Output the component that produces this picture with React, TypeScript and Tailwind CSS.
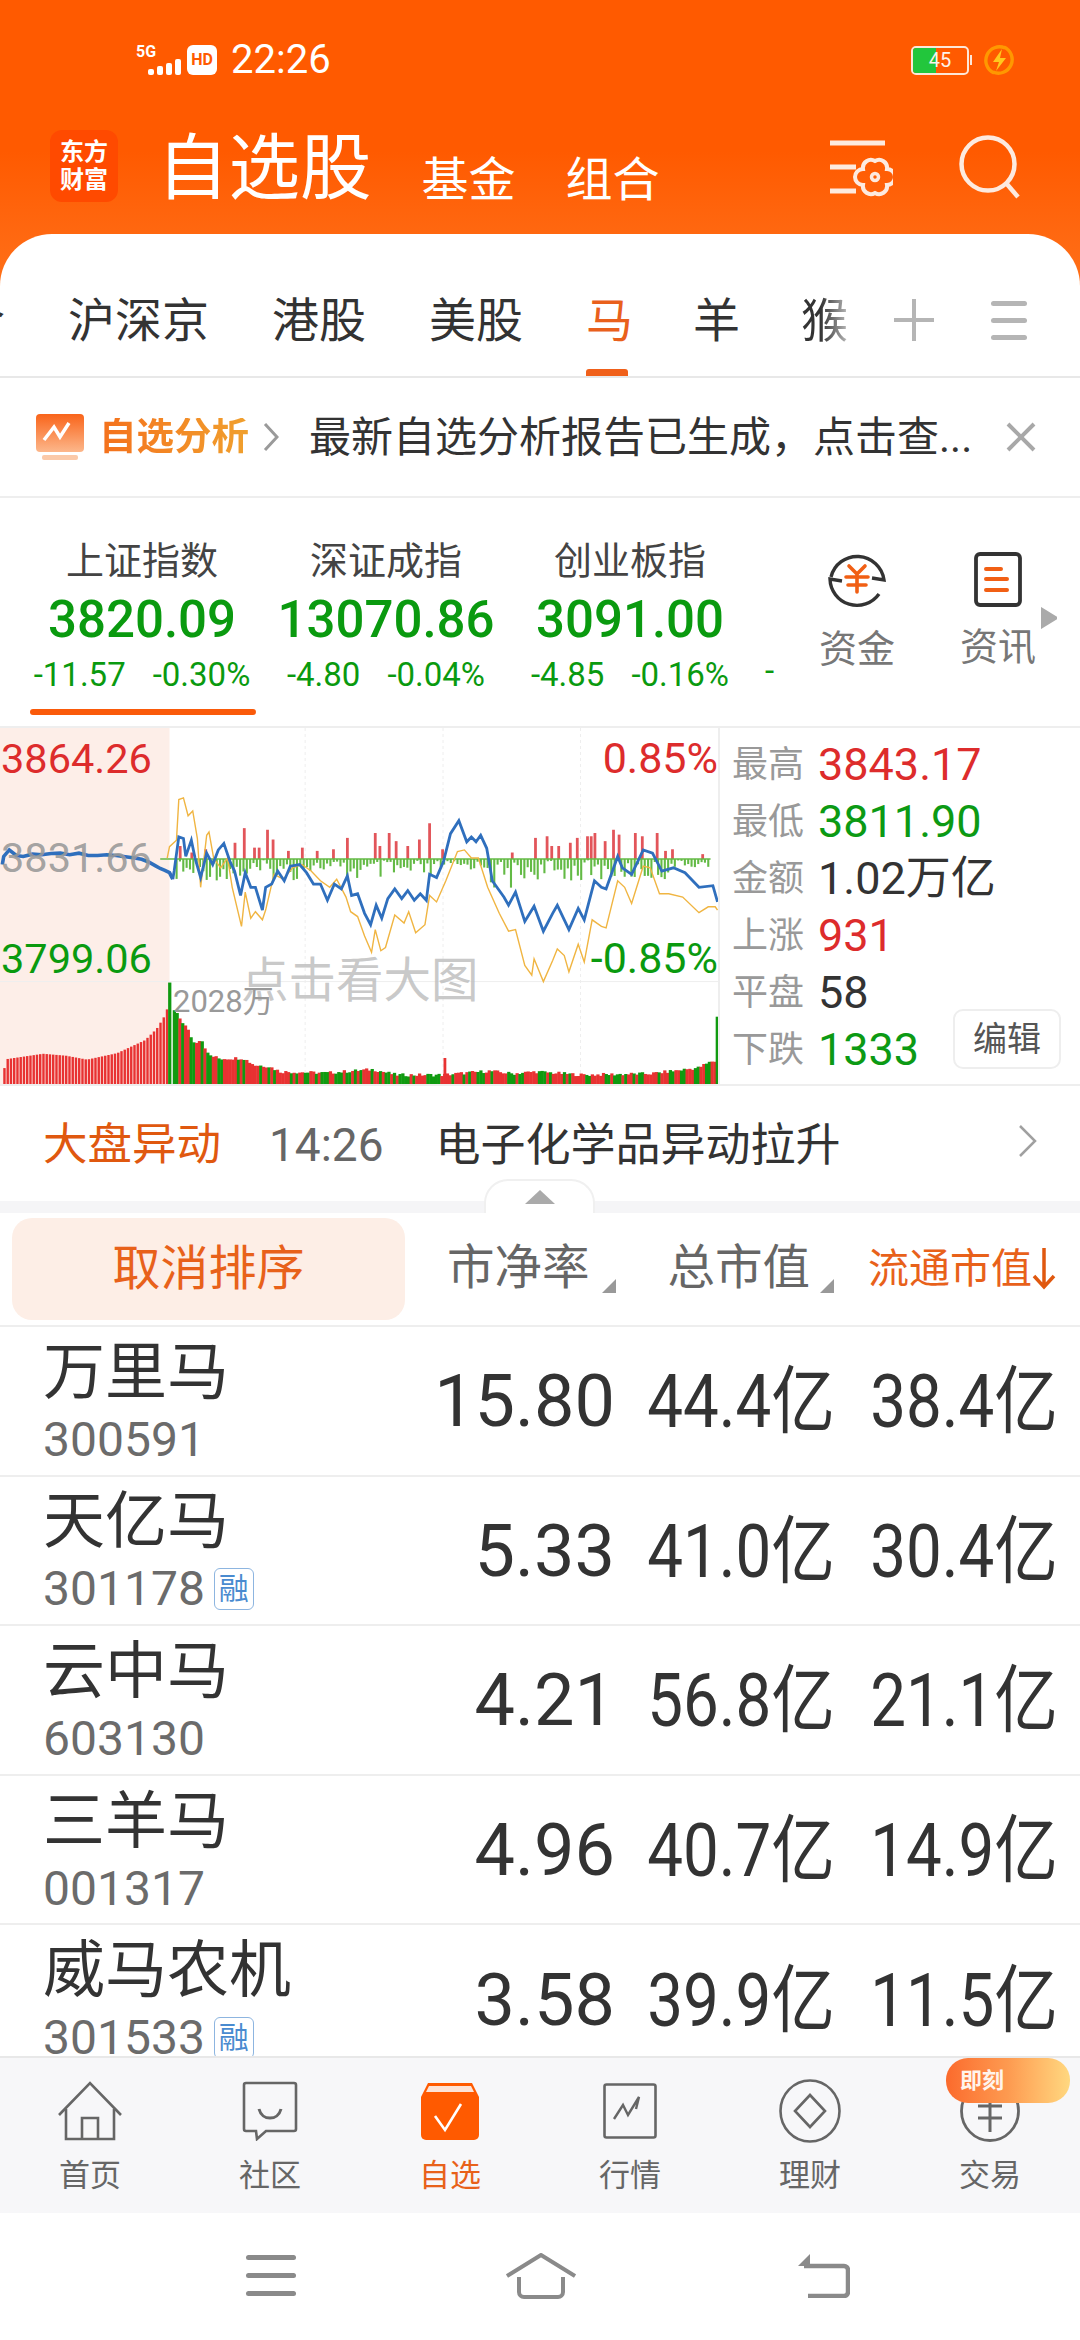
const blue1 = "5,420 8,395 20,375 35,392 50,395 70,388 90,390 110,386 130,385 150,390 170,385 190,392 210,392 230,390 250,392 270,396 290,400 305,404 320,412 335,424 345,432 355,438 365,445 372,465"
const blue2 = "372,465 375,440 385,335 395,340 400,395 412,345 420,400 432,460 445,385 458,420 470,375 482,355 495,410 505,440 518,515 528,445 540,490 550,490 565,560 572,490 585,480 598,440 612,470 625,425 645,420 660,445 675,480 690,480 705,530 720,480 735,495 748,455 757,515 770,510 785,570 798,605 810,545 822,585 835,525 850,495 865,525 878,500 892,530 905,510 918,530 925,450 940,460 955,410 970,325 988,285 1005,350 1015,335 1025,350 1035,330 1048,370 1060,470 1085,520 1095,545 1110,505 1130,595 1150,548 1170,625 1190,570 1200,545 1215,590 1225,620 1245,555 1258,590 1280,470 1295,490 1305,495 1330,395 1340,430 1360,450 1385,375 1405,385 1425,440 1450,430 1475,445 1505,490 1535,485 1545,535"
const yellow = "360,400 365,365 380,345 385,220 395,215 405,270 415,255 425,340 432,490 445,330 450,320 460,400 475,430 490,400 500,490 520,610 528,505 540,585 550,565 565,590 572,560 590,450 610,465 630,430 650,420 670,440 690,470 710,490 725,465 745,520 755,565 770,580 785,640 800,690 808,620 820,685 830,675 850,575 870,600 880,565 895,630 915,605 925,515 940,535 960,470 985,380 1000,375 1015,400 1030,400 1050,490 1075,570 1095,625 1110,620 1130,730 1145,760 1150,710 1170,780 1190,715 1200,680 1215,700 1225,750 1245,665 1258,720 1275,590 1295,610 1305,615 1330,470 1345,490 1360,540 1385,425 1400,430 1420,510 1440,510 1470,520 1505,568 1525,550 1540,550 1545,560"

const redBars = [[385,40],[410,20],[440,30],[503,50],[523,95],[545,35],[555,35],[573,90],[585,60],[618,25],[648,35],[680,25],[715,30],[745,65],[805,80],[815,40],[835,80],[850,55],[875,40],[900,60],[922,110],[950,30],[1100,20],[1150,65],[1175,70],[1185,40],[1200,40],[1225,50],[1240,65],[1262,70],[1270,70],[1278,80],[1300,55],[1318,90],[1330,75],[1365,80],[1380,70],[1412,80],[1430,25],[1445,30],[1510,15]]

const rnd = (n: number) => {
  const v = Math.sin(n * 12.9898) * 43758.5453
  return v - Math.floor(v)
}

const greenBars = Array.from({ length: 160 }, (_, i) => {
  const x = 378 + i * 7.2
  let max = 62
  if (x > 640 && x < 730) max = 35
  if (x > 940 && x < 1050) max = 30
  if (x > 1050 && x < 1120) max = 90
  if (x > 1440) max = 22
  return { x, h: 4 + rnd(i + 1) * max }
})

const volPts = [[365,860],[385,900],[400,930],[415,975],[430,960],[445,1010],[470,1022],[520,1020],[545,1042],[575,1045],[600,1062],[700,1066],[800,1055],[850,1072],[950,1072],[1050,1060],[1100,1068],[1150,1062],[1250,1072],[1400,1068],[1500,1050],[1530,1030]]
const prePts = [[6,1050],[14,1018],[90,1002],[140,1008],[185,1020],[250,1000],[310,960],[335,925],[350,890],[360,855]]

const lerp = (pts: number[][], x: number) => {
  for (let i = 1; i < pts.length; i++) {
    if (x <= pts[i][0]) {
      const t = (x - pts[i - 1][0]) / (pts[i][0] - pts[i - 1][0])
      return pts[i - 1][1] + t * (pts[i][1] - pts[i - 1][1])
    }
  }
  return pts[pts.length - 1][1]
}

const preBars = Array.from({ length: 51 }, (_, i) => 7 + i * 7)
const volBars = Array.from({ length: 195 }, (_, i) => {
  const x = 372 + i * 6
  return { x, top: lerp(volPts, x) - rnd(i + 40) * 10, up: rnd(i + 300) > 0.5 }
})

function IntradayChart() {
  return (
    <svg viewBox="0 0 1546 1095" preserveAspectRatio="none" className="absolute inset-0 w-full h-full">
      <rect x="0" y="0" width="365" height="1095" fill="#fdeee8" />
      <line x1="0" y1="780" x2="1546" y2="780" stroke="#eee" strokeWidth="1" vectorEffect="non-scaling-stroke" />
      {[657, 954, 1250].map((x) => (
        <line key={x} x1={x} y1="0" x2={x} y2="1095" stroke="#eee" strokeWidth="1" strokeDasharray="3 3" vectorEffect="non-scaling-stroke" />
      ))}
      {greenBars.map((b) => (
        <rect key={b.x} x={b.x} y="403" width="4.5" height={b.h} fill="#63ba45" />
      ))}
      {redBars.map(([x, h]) => (
        <rect key={x} x={x} y={403 - h} width="6" height={h} fill="#e2555a" />
      ))}
      <line x1="345" y1="403" x2="1530" y2="403" stroke="#63ba45" strokeWidth="1.5" vectorEffect="non-scaling-stroke" />
      <polyline points={yellow} fill="none" stroke="#f0b542" strokeWidth="1.4" vectorEffect="non-scaling-stroke" />
      <polyline points={blue2} fill="none" stroke="#2f6fbd" strokeWidth="2.8" vectorEffect="non-scaling-stroke" />
      <polyline points={blue1} fill="none" stroke="#2f6fbd" strokeWidth="3.6" vectorEffect="non-scaling-stroke" />
      {preBars.map((x) => (
        <rect key={x} x={x} y={lerp(prePts, x)} width="5.2" height={1095 - lerp(prePts, x)} fill="#e83232" />
      ))}
      {volBars.map((b) => (
        <rect key={b.x} x={b.x} y={b.top} width="7" height={1095 - b.top} fill={b.up ? "#e83232" : "#109a10"} />
      ))}
      <rect x="362" y="783" width="7" height="312" fill="#109a10" />
      <rect x="955" y="1015" width="6" height="80" fill="#e83232" />
      <rect x="1541" y="888" width="5" height="207" fill="#109a10" />
    </svg>
  )
}

function SettingsIcon() {
  return (
    <svg width="64" height="58" viewBox="0 0 64 58" fill="none" stroke="#fdeadf" strokeWidth="5">
      <path d="M1 4h55M1 28h26M1 52h26" />
      <path d="M46 22A8 8 0 0 1 58 30A8 8 0 0 1 58 46A8 8 0 0 1 46 54A8 8 0 0 1 34 46A8 8 0 0 1 34 30A8 8 0 0 1 46 22z" strokeWidth="4" />
      <circle cx="46" cy="38" r="3.5" strokeWidth="3.5" />
    </svg>
  )
}

function HomeIcon() {
  return (
    <svg width="64" height="60" viewBox="0 0 64 60" fill="none" stroke="#666" strokeWidth="2.6">
      <path d="M1 34L32 2l31 32" />
      <path d="M8 28v30h48V28M24 58V37h16v21" />
    </svg>
  )
}

function CommunityIcon() {
  return (
    <svg width="56" height="60" viewBox="0 0 56 60" fill="none" stroke="#666" strokeWidth="2.6">
      <path d="M4 2h48a2 2 0 0 1 2 2v44a2 2 0 0 1-2 2H24l-9 8-1-8H4a2 2 0 0 1-2-2V4a2 2 0 0 1 2-2z" />
      <path d="M17 28c3 12 19 12 22 0" strokeWidth="3" />
    </svg>
  )
}

function WatchIcon() {
  return (
    <svg width="58" height="58" viewBox="0 0 58 58" fill="none">
      <path d="M7 1h44l7 14v38a5 5 0 0 1-5 5H5a5 5 0 0 1-5-5V15z" fill="#ff5a00" />
      <path d="M8 4h42l3 6H5z" fill="#fde3d6" />
      <path d="M14 34l10 14L40 22" stroke="#fff" strokeWidth="2.6" />
    </svg>
  )
}

function MarketIcon() {
  return (
    <svg width="54" height="56" viewBox="0 0 54 56" fill="none" stroke="#666" strokeWidth="2.6">
      <rect x="1.5" y="1.5" width="51" height="53" rx="2" />
      <path d="M11 36l9-14 5 10 11-18-3 12" strokeWidth="2.4" />
    </svg>
  )
}

function FinanceIcon() {
  return (
    <svg width="62" height="64" viewBox="0 0 62 64" fill="none" stroke="#666" strokeWidth="2.6">
      <ellipse cx="31" cy="32" rx="29.5" ry="30.5" />
      <path d="M31 16l15 16-15 16-15-16z" />
    </svg>
  )
}

function TradeIcon() {
  return (
    <svg width="60" height="62" viewBox="0 0 60 62" fill="none" stroke="#666" strokeWidth="2.8">
      <ellipse cx="30" cy="31" rx="28.5" ry="29.5" />
      <path d="M18 26h24M18 38h24M30 22v30" strokeWidth="3" />
    </svg>
  )
}

const navItems = [
  { label: "首页", icon: <HomeIcon /> },
  { label: "社区", icon: <CommunityIcon /> },
  { label: "自选", icon: <WatchIcon />, active: true },
  { label: "行情", icon: <MarketIcon /> },
  { label: "理财", icon: <FinanceIcon /> },
  { label: "交易", icon: <TradeIcon /> },
]

const indexes = [
  { name: "上证指数", value: "3820.09", change: "-11.57", pct: "-0.30%" },
  { name: "深证成指", value: "13070.86", change: "-4.80", pct: "-0.04%" },
  { name: "创业板指", value: "3091.00", change: "-4.85", pct: "-0.16%" },
]

const stats = [
  { label: "最高", value: "3843.17", color: "text-[#dd2c2c]" },
  { label: "最低", value: "3811.90", color: "text-[#0c9a14]" },
  { label: "金额", value: "1.02万亿", color: "text-[#333]" },
  { label: "上涨", value: "931", color: "text-[#dd2c2c]" },
  { label: "平盘", value: "58", color: "text-[#333]" },
  { label: "下跌", value: "1333", color: "text-[#0c9a14]" },
]

const stocks = [
  { name: "万里马", code: "300591", pb: "15.80", cap: "44.4亿", flow: "38.4亿" },
  { name: "天亿马", code: "301178", pb: "5.33", cap: "41.0亿", flow: "30.4亿", margin: true },
  { name: "云中马", code: "603130", pb: "4.21", cap: "56.8亿", flow: "21.1亿" },
  { name: "三羊马", code: "001317", pb: "4.96", cap: "40.7亿", flow: "14.9亿" },
  { name: "威马农机", code: "301533", pb: "3.58", cap: "39.9亿", flow: "11.5亿", margin: true },
]

export default function App() {
  return (
    <div className="w-[1080px] h-[2340px] overflow-hidden flex flex-col bg-white text-[#333] font-['Roboto','Noto_Sans_CJK_SC',sans-serif]">
      {/* Orange header + tabs */}
      <div className="bg-gradient-to-b from-[#ff5a00] from-[40%] to-[#ff7d22]">
        <div className="h-[120px] flex items-center pl-[136px] pr-[66px] text-white">
          <div className="flex flex-col items-start leading-none">
            <span className="text-[16px] font-bold leading-[14px]">5G</span>
            <div className="flex items-end gap-[3px] h-[16px] ml-[12px]">
              <span className="w-[6px] h-[6px] bg-white rounded-[2px]" />
              <span className="w-[6px] h-[9px] bg-white rounded-[2px]" />
              <span className="w-[6px] h-[12px] bg-white rounded-[2px]" />
              <span className="w-[6px] h-[16px] bg-white rounded-[2px]" />
            </div>
          </div>
          <span className="ml-[6px] w-[30px] h-[30px] rounded-[6px] bg-white text-[#ff5a00] text-[16px] font-bold flex items-center justify-center">HD</span>
          <span className="ml-[14px] text-[40px] leading-[36px]">22:26</span>
          <div className="ml-auto flex items-center gap-[12px]">
            <div className="flex items-center">
              <div className="w-[58px] h-[29px] rounded-[5px] border-2 border-[#fde7d8] overflow-hidden relative flex items-center justify-center">
                <span className="absolute left-0 top-0 bottom-0 w-[23px] bg-[#22c63c]" />
                <span className="relative text-[20px] text-[#fdf3ea]">45</span>
              </div>
              <span className="w-[2px] h-[10px] bg-[#fde7d8] ml-[1px]" />
            </div>
            <svg width="30" height="32" viewBox="0 0 30 32" fill="none">
              <path d="M21 4A13.5 13.5 0 0 0 10 29M9 28A13.5 13.5 0 0 0 20 3M19 3" stroke="#ff9800" strokeWidth="3.4" />
              <path d="M18 5L9 18h6l-3 9 10-13h-6z" fill="#ffc81e" />
            </svg>
          </div>
        </div>
        <div className="h-[114px] flex pl-[50px] pr-[57px] pt-[10px] text-white">
          <div className="w-[68px] h-[72px] rounded-[12px] bg-[#ff4a00] flex flex-col items-center justify-center text-[24px] font-bold leading-[28px]">
            <span>东方</span>
            <span>财富</span>
          </div>
          <span className="ml-[39px] mt-[3px] text-[71.5px] leading-[72px] h-[72px]">自选股</span>
          <span className="ml-[50px] mt-[24px] text-[47px] leading-[52px]">基金</span>
          <span className="ml-[50px] mt-[24px] text-[47px] leading-[52px]">组合</span>
          <div className="ml-auto flex items-start gap-[66px] pt-[9px]">
            <SettingsIcon />
            <svg width="64" height="64" viewBox="0 0 64 64" fill="none" stroke="#fdeadf" strokeWidth="4.5" className="-mt-[4px]">
              <circle cx="29" cy="29" r="26.5" />
              <path d="M47 48l12 14" />
            </svg>
          </div>
        </div>

        <div className="rounded-t-[52px] bg-white h-[144px] border-b-2 border-[#e8e8e8] overflow-hidden relative flex items-center text-[47px] leading-none pt-[30px]">
          <div className="flex items-center gap-[63px] ml-[-42px]">
            <span>合</span>
            <span>沪深京</span>
            <span>港股</span>
            <span>美股</span>
            <span className="text-[#e9601c]">马</span>
            <span className="-ml-[3px]">羊</span>
            <span className="-ml-[2px] bg-gradient-to-r from-[#333] from-[40%] to-[#bbb] bg-clip-text text-transparent">猴</span>
          </div>
          <svg width="40" height="42" viewBox="0 0 40 42" className="ml-[46px]" stroke="#b5b5b5" strokeWidth="4">
            <path d="M20 0v42M0 21h40" />
          </svg>
          <div className="ml-[57px] flex flex-col gap-[12px]">
            <span className="w-[36px] h-[5px] bg-[#b5b5b5] rounded-full" />
            <span className="w-[36px] h-[5px] bg-[#b5b5b5] rounded-full" />
            <span className="w-[36px] h-[5px] bg-[#b5b5b5] rounded-full" />
          </div>
          <span className="absolute left-[586px] bottom-0 w-[42px] h-[7px] rounded-t-[3px] bg-[#f0601a]" />
        </div>
      </div>

      {/* Analysis notice */}
      <div className="h-[120px] shrink-0 flex items-center pl-[36px] border-b-2 border-[#eee]">
        <svg width="48" height="46" viewBox="0 0 48 46" fill="none">
          <rect width="48" height="38" rx="4" fill="url(#noticeFill)" />
          <path d="M8 26l10-13 6 10 9-14" stroke="#fff" strokeWidth="3.5" />
          <rect x="6" y="41" width="36" height="5" rx="2" fill="#fbc9a8" />
          <defs>
            <linearGradient id="noticeFill" x1="0" y1="0" x2="0" y2="1">
              <stop offset="0" stopColor="#f9641a" />
              <stop offset="1" stopColor="#fcb78b" />
            </linearGradient>
          </defs>
        </svg>
        <span className="ml-[15px] text-[37.5px] leading-none font-bold bg-gradient-to-r from-[#f4701c] to-[#f0a02e] bg-clip-text text-transparent">自选分析</span>
        <svg width="16" height="30" viewBox="0 0 16 30" className="ml-[14px]" fill="none" stroke="#9a9a9a" strokeWidth="3">
          <path d="M2 2l12 13L2 28" />
        </svg>
        <span className="ml-[30px] text-[42px] leading-none whitespace-nowrap pt-[2px]">最新自选分析报告已生成，点击查...</span>
        <svg width="30" height="30" viewBox="0 0 30 30" className="ml-[34px] shrink-0" stroke="#a8a8a8" strokeWidth="4">
          <path d="M2 2l26 26M28 2L2 28" />
        </svg>
      </div>

      {/* Index strip */}
      <div className="h-[230px] shrink-0 flex pl-[20px] relative border-b-2 border-[#eee]">
        {indexes.map((idx) => (
          <div key={idx.name} className="w-[244px] flex flex-col items-center">
            <span className="mt-[41px] text-[38px] leading-[44px] text-[#444]">{idx.name}</span>
            <span className="mt-[9px] text-[51px] leading-[56px] font-medium text-[#0a9a0f]">{idx.value}</span>
            <div className="mt-[9px] flex gap-[27px] text-[33px] leading-[36px] text-[#0a9a0f] whitespace-nowrap">
              <span>{idx.change}</span>
              <span>{idx.pct}</span>
            </div>
          </div>
        ))}
        <span className="absolute left-[765px] top-[155px] text-[33px] leading-[36px] text-[#0a9a0f]">-</span>
        <span className="absolute left-[30px] top-[211px] w-[226px] h-[6px] rounded-full bg-[#fa5a0a]" />
        <div className="flex flex-col items-center w-[80px] ml-[65px] pt-[52px]">
          <svg width="60" height="60" viewBox="0 0 60 60" fill="none" stroke="#333" strokeWidth="3.4">
            <path d="M4 27A27 27 0 0 1 57 30L45 28" />
            <path d="M15 31L3 29A27 27 0 0 0 52 44" />
            <path d="M22 16l8 8 8-8M19 27h22M21 35h18M30 24v18" stroke="#f15f14" strokeWidth="3.6" strokeLinecap="round" />
          </svg>
          <span className="mt-[17px] text-[38px] leading-[44px] text-[#777] whitespace-nowrap">资金</span>
        </div>
        <div className="flex flex-col items-center w-[80px] ml-[61px] pt-[54px]">
          <svg width="48" height="56" viewBox="0 0 48 56" fill="none">
            <rect x="2" y="2" width="44" height="51" rx="4" stroke="#333" strokeWidth="3.8" />
            <path d="M12 17h15M12 27h21M12 38h21" stroke="#f15f14" strokeWidth="4" strokeLinecap="round" />
          </svg>
          <span className="mt-[17px] text-[38px] leading-[44px] text-[#777] whitespace-nowrap">资讯</span>
        </div>
        <svg width="16" height="24" viewBox="0 0 16 24" className="absolute left-[1041px] top-[108px]">
          <path d="M0 2l16 10L0 22z" fill="#aaa" stroke="#aaa" strokeWidth="2" strokeLinejoin="round" />
        </svg>
      </div>

      {/* Chart and stats */}
      <div className="h-[358px] shrink-0 flex border-b-2 border-[#eee]">
        <div className="w-[720px] relative border-r-2 border-[#eee] overflow-hidden leading-none">
          <IntradayChart />
          <span className="absolute left-[1px] top-[10px] text-[41.5px] text-[#dd2c2c]">3864.26</span>
          <span className="absolute right-0 top-[9px] text-[43px] text-[#dd2c2c]">0.85%</span>
          <span className="absolute left-[1px] top-[109px] text-[41.5px] text-[#999]/90">3831.66</span>
          <span className="absolute left-[1px] top-[210px] text-[41.5px] text-[#0a9a0f]">3799.06</span>
          <span className="absolute right-0 top-[209px] text-[43px] text-[#0a9a0f]">-0.85%</span>
          <span className="absolute left-[241px] top-[230px] text-[47.5px] text-[#bbb]/80 whitespace-nowrap">点击看大图</span>
          <span className="absolute left-[173px] top-[258px] text-[31px] text-[#999]">2028万</span>
        </div>
        <div className="flex-1 pl-[12px] pt-[8px] relative">
          {stats.map((s) => (
            <div key={s.label} className="h-[57px] flex items-center">
              <span className="text-[36px] leading-none text-[#999] w-[86px]">{s.label}</span>
              <span className={`text-[45px] leading-none whitespace-nowrap ${s.color}`}>{s.value}</span>
            </div>
          ))}
          <div className="absolute left-[233px] top-[281px] w-[108px] h-[60px] border-2 border-[#eee] rounded-[10px] flex items-center justify-center text-[34px] leading-none text-[#555]">编辑</div>
        </div>
      </div>

      {/* Market movers */}
      <div className="h-[115px] shrink-0 flex items-center pl-[43px] pt-[3px] relative">
        <span className="text-[44.5px] leading-none text-[#e0580f]">大盘异动</span>
        <span className="ml-[48px] text-[46px] leading-none text-[#666]">14:26</span>
        <span className="ml-[52px] text-[45px] leading-none">电子化学品异动拉升</span>
        <svg width="20" height="34" viewBox="0 0 20 34" className="absolute left-[1018px] top-[38px]" fill="none" stroke="#a0a0a0" strokeWidth="2.5">
          <path d="M2 2l15 15L2 32" />
        </svg>
      </div>
      <div className="h-[12px] shrink-0 bg-[#f5f5f7] relative">
        <div className="absolute left-[484px] bottom-0 w-[111px] h-[34px] bg-white border-t-2 border-x-2 border-[#f0f0f0] rounded-t-[24px] flex items-center justify-center">
          <svg width="30" height="14" viewBox="0 0 30 14"><path d="M15 0l15 14H0z" fill="#aaa" /></svg>
        </div>
      </div>

      {/* Sort header */}
      <div className="h-[114px] shrink-0 flex items-center border-b-2 border-[#eee] relative">
        <div className="ml-[12px] w-[393px] h-[102px] rounded-[20px] bg-[#fdeee6] flex items-center justify-center text-[48px] leading-none text-[#e8611a]">取消排序</div>
        <span className="ml-[42px] text-[47.5px] leading-none text-[#666]">市净率</span>
        <svg width="14" height="14" viewBox="0 0 14 14" className="ml-[12px] self-end mb-[32px]"><path d="M14 0v14H0z" fill="#999" /></svg>
        <span className="ml-[52px] text-[47.5px] leading-none text-[#666]">总市值</span>
        <svg width="14" height="14" viewBox="0 0 14 14" className="ml-[10px] self-end mb-[32px]"><path d="M14 0v14H0z" fill="#999" /></svg>
        <span className="ml-[34px] text-[41px] leading-none text-[#e8611a] whitespace-nowrap">流通市值</span>
        <svg width="24" height="42" viewBox="0 0 24 42" fill="none" stroke="#e0580f" strokeWidth="3.5">
          <path d="M12 0v39M2 28l10 11 10-11" />
        </svg>
      </div>

      {/* Stock rows */}
      <div className="flex-1 overflow-hidden">
        {stocks.map((s) => (
          <div key={s.code} className="h-[149.6px] flex items-center border-b-2 border-[#eee] pt-[3px]">
            <div className="w-[403px] pl-[43px] flex flex-col">
              <span className="text-[62px] leading-[70px] whitespace-nowrap">{s.name}</span>
              <div className="mt-[5px] flex items-center h-[54px]">
                <span className="text-[48px] leading-none text-[#6b6b6b]">{s.code}</span>
                {s.margin && (
                  <span className="ml-[9px] w-[40px] h-[42px] rounded-[6px] border border-[#8db5e0] flex items-center justify-center text-[30px] leading-none text-[#4a8bd0]">融</span>
                )}
              </div>
            </div>
            <span className="w-[212px] text-right text-[72px] leading-none">{s.pb}</span>
            <span className="w-[220px] text-right text-[74px] leading-none whitespace-nowrap scale-x-[0.86] origin-right">{s.cap}</span>
            <span className="w-[223px] text-right text-[74px] leading-none whitespace-nowrap scale-x-[0.86] origin-right">{s.flow}</span>
          </div>
        ))}
      </div>

      {/* Bottom tab bar */}
      <div className="h-[157px] shrink-0 bg-[#f7f7f9] border-t-2 border-[#e8e8e8] relative grid grid-cols-6">
        {navItems.map((item) => (
          <div key={item.label} className="flex flex-col items-center">
            <div className="h-[64px] mt-[21px] flex items-center">{item.icon}</div>
            <span className={`mt-[15px] text-[31px] leading-[36px] ${item.active ? "text-[#e8611a]" : "text-[#666]"}`}>{item.label}</span>
          </div>
        ))}
        <div className="absolute left-[946px] top-0 w-[124px] h-[45px] rounded-[22px] bg-gradient-to-r from-[#fb6a2c] via-[#fd9a50] to-[#ffd880] flex items-center pl-[14px] text-[22px] font-bold leading-none text-[#fff4ec]">即刻</div>
      </div>

      {/* System nav */}
      <div className="h-[127px] shrink-0 bg-white flex items-center pb-[2px]">
        <div className="ml-[246px] flex flex-col gap-[13px]">
          <span className="w-[50px] h-[5px] rounded-full bg-[#8a8a8a]" />
          <span className="w-[50px] h-[5px] rounded-full bg-[#8a8a8a]" />
          <span className="w-[50px] h-[5px] rounded-full bg-[#8a8a8a]" />
        </div>
        <svg width="70" height="46" viewBox="0 0 70 46" fill="none" stroke="#8a8a8a" strokeWidth="4" strokeLinejoin="round" className="ml-[210px]">
          <path d="M1 23L35 2l34 21" />
          <path d="M13 24v15a5 5 0 0 0 5 5h34a5 5 0 0 0 5-5V24" />
        </svg>
        <svg width="52" height="44" viewBox="0 0 52 44" fill="none" stroke="#8a8a8a" strokeWidth="4.5" strokeLinejoin="round" className="ml-[222px]">
          <path d="M6 12h40a4 4 0 0 1 4 4v22a4 4 0 0 1-4 4H10" />
          <path d="M0 12h12V0z" fill="#8a8a8a" stroke="none" />
        </svg>
      </div>
    </div>
  )
}
